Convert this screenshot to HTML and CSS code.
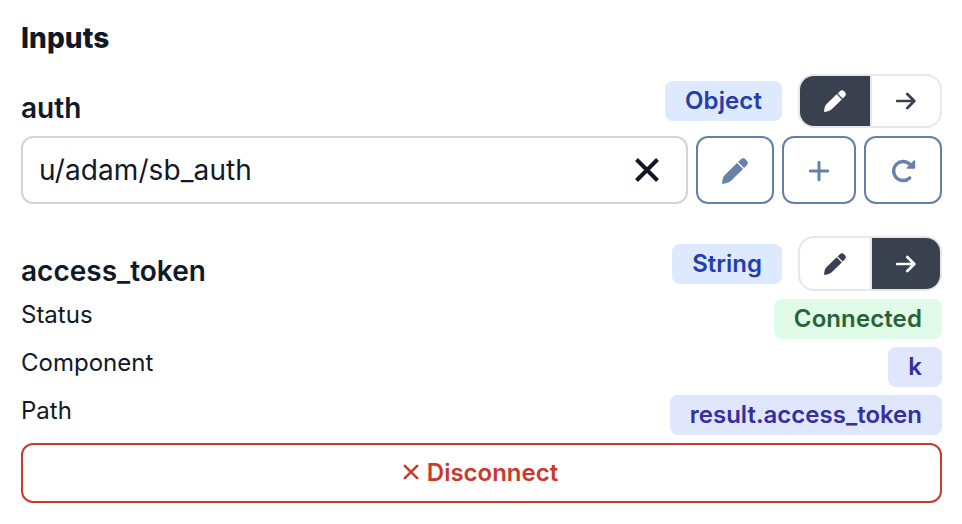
FILE: index.html
```html
<!DOCTYPE html>
<html lang="en">
<head>
<meta charset="utf-8">
<title>Inputs</title>
<link rel="stylesheet" href="styles.css">
</head>
<body>
<svg class="defs" aria-hidden="true">
  <symbol id="pen" viewBox="0 0 22 22"><path d="M12.7 4.3 17.8 9.4 7.7 19.2Q5.4 21 2.9 21.4L.5 21.9Q0 21.9.1 21.4L.4 18.6Q.8 15.7 2.6 14.1ZM13.6 3.4 16.2 .9Q17.3-.1 18.7.3 20.7 1.3 21.7 3.3 22.2 4.8 21.2 5.9L18.7 8.5Z" fill="currentColor"/></symbol>
  <symbol id="arrow" viewBox="0 0 20 18"><path d="M1.2 9H18.2M11.3 2 18.3 9 11.3 16" fill="none" stroke="currentColor" stroke-width="2.7" stroke-linecap="round" stroke-linejoin="round"/></symbol>
</svg>
<main class="panel">
  <h1 class="title">Inputs</h1>

  <section class="field">
    <header class="head">
      <h2 class="name">auth</h2>
      <span class="badge blue spaced">Object</span>
      <div class="toggle">
        <button class="option active" aria-label="Edit"><svg class="pen"><use href="#pen"/></svg></button>
        <button class="option" aria-label="Connect"><svg class="arrow"><use href="#arrow"/></svg></button>
      </div>
    </header>
    <div class="resource">
      <div class="select"><span>u/adam/sb_auth</span>
        <svg class="clear" viewBox="0 0 24 24"><path d="M1.5 1.5 22.5 22.5M22.5 1.5 1.5 22.5" fill="none" stroke="currentColor" stroke-width="4"/></svg>
      </div>
      <button class="action" aria-label="Edit resource"><svg class="pen-large"><use href="#pen"/></svg></button>
      <button class="action narrow" aria-label="Add resource"><svg class="plus" viewBox="0 0 20 20"><path d="M10 1.3V18.7M1.3 10H18.7" fill="none" stroke="currentColor" stroke-width="3" stroke-linecap="round"/></svg></button>
      <button class="action" aria-label="Refresh"><svg class="refresh" viewBox="0 0 25 24"><path d="M19 5.4A9.5 9.5 0 1 0 18.7 18.9" fill="none" stroke="currentColor" stroke-width="3.4" stroke-linecap="round"/><path d="M22.9 1.5Q24.2.6 24.2 2.2V8.8Q24.2 9.7 23.3 9.7H16.4Q14.8 9.7 15.8 8.5Z" fill="currentColor"/></svg></button>
    </div>
  </section>

  <section class="field connected">
    <header class="head">
      <h2 class="name">access_token</h2>
      <span class="badge blue">String</span>
      <div class="toggle tall">
        <button class="option" aria-label="Edit"><svg class="pen"><use href="#pen"/></svg></button>
        <button class="option active" aria-label="Connect"><svg class="arrow"><use href="#arrow"/></svg></button>
      </div>
    </header>
    <div class="details">
      <div class="row"><span class="label">Status</span><span class="badge green spaced">Connected</span></div>
      <div class="row"><span class="label">Component</span><span class="badge indigo">k</span></div>
      <div class="row"><span class="label">Path</span><span class="badge indigo">result.access_token</span></div>
    </div>
    <button class="disconnect"><svg class="cross" viewBox="0 0 16 16"><path d="M1.8 1.8 14.2 14.2M14.2 1.8 1.8 14.2" fill="none" stroke="currentColor" stroke-width="2.6" stroke-linecap="round"/></svg><span>Disconnect</span></button>
  </section>
</main>
</body>
</html>
```

FILE: styles.css
```css
* { box-sizing: border-box; }
body { margin: 0; background: #fff; color: #111827; font-family: Inter, "Liberation Sans", sans-serif; }
button { margin: 0; padding: 0; border: 0; background: transparent; font: inherit; }
svg { display: block; flex: none; overflow: visible; }
.defs { position: absolute; width: 0; height: 0; }
.panel { padding: 18px 20px 0 21px; }
.title { margin: 0; height: 40px; font-size: 28px; line-height: 40px; font-weight: 800; letter-spacing: .05px; }
.field { margin-top: 16px; }
.connected { margin-top: 32px; }
.head { display: flex; align-items: center; }
.name { margin: 14px auto 0 0; font-size: 28px; line-height: 40px; font-weight: 600; }
.badge { height: 40px; padding: 0 20px; border-radius: 8px; font-size: 24px; line-height: 40px; font-weight: 600; white-space: nowrap; }
.spaced { letter-spacing: .1px; }
.blue { background: #dde9fc; color: #233eac; }
.green { background: #e0fbe7; color: #2a6238; }
.indigo { background: #e0e7fd; color: #362f9f; }
.toggle { display: flex; width: 144px; height: 54px; margin-left: 16px; border: 2px solid #e5e7eb; border-radius: 16px; overflow: hidden; }
.tall { height: 55px; }
.option { display: flex; align-items: center; justify-content: center; width: 70px; color: #374151; }
.option + .option { border-left: 2px solid #e5e7eb; }
.active { background: #39414f; color: #fff; }
.pen { width: 22px; height: 22px; }
.arrow { width: 20px; height: 18px; }
.resource { display: flex; gap: 8px; margin-top: 8px; height: 68px; }
.select { display: flex; align-items: center; justify-content: space-between; flex: 1; padding: 0 27px 0 16px; border: 2px solid #d1d5db; border-radius: 12px; font-size: 28px; line-height: 40px; letter-spacing: .1px; }
.clear { width: 24px; height: 24px; }
.action { display: flex; align-items: center; justify-content: center; width: 78px; border: 2px solid #6380aa; border-radius: 12px; color: #6681ab; }
.narrow { width: 74px; }
.pen-large { width: 26px; height: 26px; margin-top: 1px; }
.plus { width: 20px; height: 20px; margin-top: 1px; }
.refresh { width: 25px; height: 24px; margin-top: 1px; }
.details { display: grid; gap: 8px; margin-top: 8px; }
.row { display: flex; justify-content: space-between; height: 40px; }
.label { font-size: 24px; line-height: 32px; }
.disconnect { display: flex; align-items: center; justify-content: center; gap: 8px; width: 100%; height: 60px; margin-top: 8px; padding: 0 2px 2px 0; border: 2px solid #c93a2e; border-radius: 12px; color: #c93a2e; font-size: 24px; font-weight: 600; }
.cross { width: 16px; height: 16px; }
```
